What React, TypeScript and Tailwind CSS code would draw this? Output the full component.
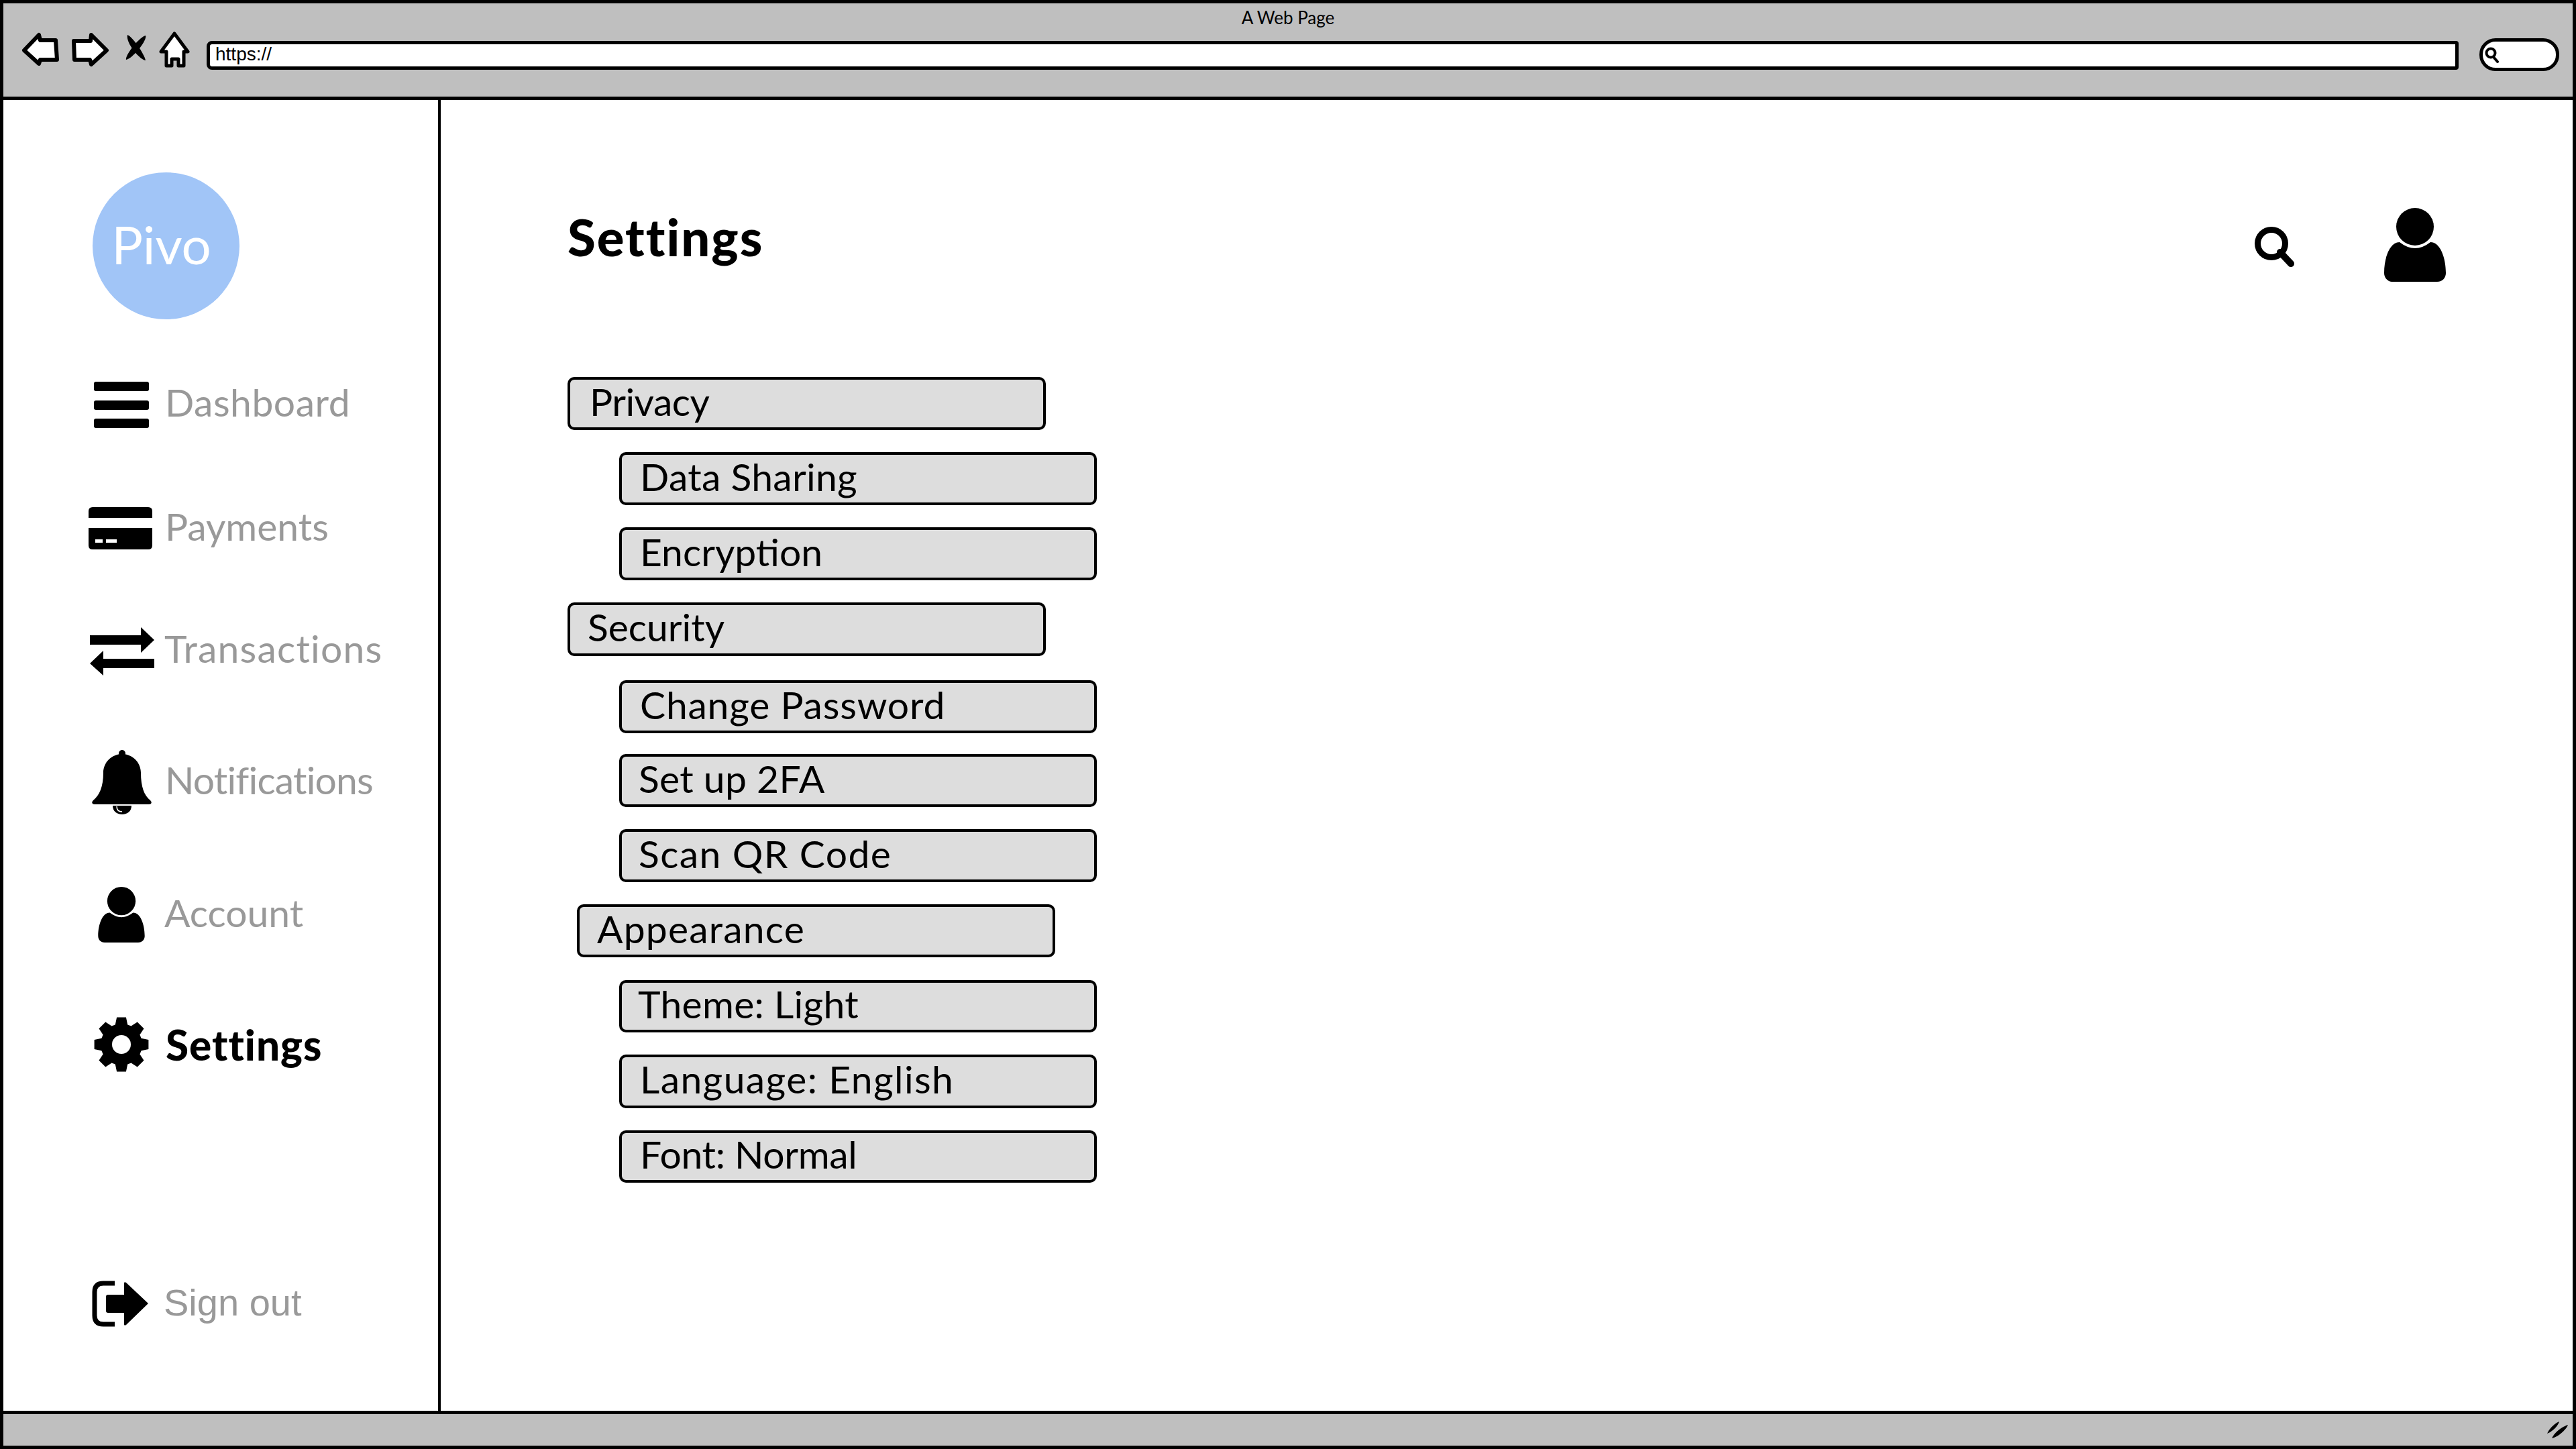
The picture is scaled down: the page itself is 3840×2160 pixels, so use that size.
const gearPath = (() => {
  // eight teeth round a centre of 41,41
  const pts: string[] = [];
  const outer = 41;
  const inner = 31;
  for (let i = 0; i < 8; i++) {
    const mid = (i * Math.PI) / 4 - Math.PI / 2;
    const a = [mid - 0.3, mid - 0.17, mid + 0.17, mid + 0.3];
    const r = [inner, outer, outer, inner];
    a.forEach((t, k) => pts.push(`${(41 + r[k] * Math.cos(t)).toFixed(1)} ${(41 + r[k] * Math.sin(t)).toFixed(1)}`));
  }
  return `M${pts.join(' L')}Z M41 27 A14 14 0 1 0 41 55 A14 14 0 1 0 41 27Z`;
})();

function UserGlyph({ className }: { className: string }) {
  return (
    <svg viewBox="0 0 92 110" className={className}>
      <circle cx="46" cy="28" r="28" />
      <path d="M23 51C8 51 0 75 0 97C0 104 5 110 13 110H79C87 110 92 104 92 97C92 75 84 51 69 51Q46 69 23 51Z" />
    </svg>
  );
}

function Toolbar() {
  return (
    <div className="h-[144px] shrink-0 bg-[#bfbfbf] border-b-[5px] border-black flex flex-col">
      <div className="h-[33px] pt-[8px] text-center text-[26px] leading-[26px] font-['Lato',sans-serif] text-black">
        A Web Page
      </div>
      <div className="flex items-start pl-[27px] pr-[20px]">
        <svg viewBox="0 0 56 50" className="w-[56px] h-[50px] mt-[10px]">
          <path d="M4 27L26 4L28 12H51L53 41H28L26 47Z" fill="#fff" stroke="#000" strokeWidth="6" strokeLinejoin="round" />
        </svg>
        <svg viewBox="0 0 57 52" className="w-[57px] h-[52px] mt-[10px] ml-[18px]">
          <path d="M4 13H29L30 4L53 27L30 48L28 41H5Z" fill="#fff" stroke="#000" strokeWidth="6" strokeLinejoin="round" />
        </svg>
        <svg viewBox="0 0 33 38" className="w-[33px] h-[38px] mt-[14px] ml-[24px]">
          <path d="M3 0C10 2 28 28 30 38C22 38 0 12 3 0Z" />
          <path d="M30 1C33 8 10 36 1 37C-1 30 22 2 30 1Z" />
        </svg>
        <svg viewBox="0 0 46 54" className="w-[46px] h-[54px] mt-[9px] ml-[17px]">
          <path d="M23 3L43 30H37V51H29V41H19V51H11V30H3Z" fill="#fff" stroke="#000" strokeWidth="5" strokeLinejoin="round" />
        </svg>
        <div className="flex-1 h-[43px] mt-[23px] ml-[25px] bg-white border-[5px] border-black rounded-l-[8px] rounded-r-[4px] pl-[8px] text-[28px] leading-[30px] font-['Liberation_Sans',sans-serif] text-black">
          https://
        </div>
        <div className="w-[119px] h-[49px] mt-[19px] ml-[31px] bg-white border-[5px] border-black rounded-[24px] flex items-center pl-[3px]">
          <svg viewBox="0 0 22 24" className="w-[22px] h-[24px]">
            <circle cx="9" cy="9" r="6.5" fill="none" stroke="#000" strokeWidth="4" />
            <path d="M13 15L19 22" stroke="#000" strokeWidth="4" strokeLinecap="round" />
          </svg>
        </div>
      </div>
    </div>
  );
}

function NavLabel({ text, className = 'text-[57px] text-[#999999] mb-[8px]' }: { text: string; className?: string }) {
  return <span className={`leading-[66px] whitespace-nowrap font-['Lato',sans-serif] ${className}`}>{text}</span>;
}

function Sidebar() {
  return (
    <aside className="w-[652px] shrink-0 border-r-[4px] border-black flex flex-col">
      <div className="w-[219px] h-[219px] mt-[108px] ml-[133px] pr-[14px] pb-[4px] rounded-full bg-[#a1c5f7] flex items-center justify-center text-white text-[78px] font-['Lato',sans-serif]">
        Pivo
      </div>

      <div className="flex items-center h-[70px] mt-[92px] pl-[135px] gap-[24px]">
        <svg viewBox="0 0 82 69" className="w-[82px] h-[69px] fill-black">
          <rect width="82" height="14" rx="3" />
          <rect y="28" width="82" height="14" rx="3" />
          <rect y="55" width="82" height="14" rx="3" />
        </svg>
        <NavLabel text="Dashboard" className="text-[57px] text-[#999999] mb-[9px] tracking-[0.5px]" />
      </div>

      <div className="flex items-center h-[63px] mt-[118px] pl-[127px] gap-[19px]">
        <svg viewBox="0 0 95 63" className="w-[95px] h-[63px]">
          <path d="M6 0H89Q95 0 95 6V16H0V6Q0 0 6 0Z" />
          <path d="M0 31H95V57Q95 63 89 63H6Q0 63 0 57Z" />
          <rect x="10" y="48" width="11" height="5" fill="#fff" />
          <rect x="26" y="48" width="16" height="5" fill="#fff" />
        </svg>
        <NavLabel text="Payments" />
      </div>

      <div className="flex items-center h-[72px] mt-[116px] pl-[129px] gap-[15px]">
        <svg viewBox="0 0 96 72" className="w-[96px] h-[72px]">
          <path d="M0 12H76V0L96 19L76 38V26H0Z" />
          <path d="M96 47H20V35L0 54L20 72V61H96Z" />
        </svg>
        <NavLabel text="Transactions" className="text-[57px] text-[#999999] mb-[11px] tracking-[1.2px]" />
      </div>

      <div className="flex items-center h-[96px] mt-[111px] pl-[132px] gap-[20px]">
        <svg viewBox="0 0 89 96" className="w-[89px] h-[96px]">
          <circle cx="45" cy="5" r="5" />
          <path d="M45 6C60 6 73 18 73 34C73 55 78 68 87 75C90 78 89 81 85 81H4C0 81 -1 78 2 75C11 68 17 55 17 34C17 18 30 6 45 6Z" />
          <path d="M31 83H59C59 91 53 96 45 96C37 96 31 91 31 83Z" />
          <path d="M37 84C37 89 40 92 45 92" fill="none" stroke="#fff" strokeWidth="1.5" />
        </svg>
        <NavLabel text="Notifications" className="text-[57px] text-[#999999] mb-[8px] tracking-[-0.8px]" />
      </div>

      <div className="flex items-center h-[83px] mt-[108px] pl-[141px] gap-[29px]">
        <UserGlyph className="w-[70px] h-[83px]" />
        <NavLabel text="Account" />
      </div>

      <div className="flex items-center h-[82px] mt-[111px] pl-[135px] gap-[25px]">
        <svg viewBox="0 0 82 82" className="w-[82px] h-[82px]">
          <path d={gearPath} fillRule="evenodd" />
        </svg>
        <NavLabel text="Settings" className="text-[62px] text-black font-black mb-[0px] tracking-[1px]" />
      </div>

      <div className="flex items-center h-[69px] mt-[311px] pl-[132px] gap-[23px]">
        <svg viewBox="0 0 84 69" className="w-[84px] h-[69px]">
          <path d="M34 4H17Q4 4 4 17V52Q4 65 17 65H34" fill="none" stroke="#000" strokeWidth="7" />
          <path d="M21 24Q21 21 24 21H48V4Q48 1 51 3L84 34L51 66Q48 68 48 65V48H24Q21 48 21 45Z" />
        </svg>
        <span className="text-[56px] leading-[66px] mb-[4px] whitespace-nowrap text-[#999999] font-['Liberation_Sans',sans-serif]">Sign out</span>
      </div>
    </aside>
  );
}

type Row = { label: string; box: string; text: string };

const rows: Row[] = [
  { label: 'Privacy', box: 'ml-[189px] mt-[0px] w-[713px] h-[79px]', text: 'pl-[29px] tracking-[-0.5px]' },
  { label: 'Data Sharing', box: 'ml-[266px] mt-[33px] w-[712px] h-[79px]', text: 'pl-[27px] tracking-[0.3px]' },
  { label: 'Encryption', box: 'ml-[266px] mt-[33px] w-[712px] h-[79px]', text: 'pl-[27px]' },
  { label: 'Security', box: 'ml-[189px] mt-[33px] w-[713px] h-[80px]', text: 'pl-[26px]' },
  { label: 'Change Password', box: 'ml-[266px] mt-[36px] w-[712px] h-[79px]', text: 'pl-[27px] tracking-[0.8px]' },
  { label: 'Set up 2FA', box: 'ml-[266px] mt-[31px] w-[712px] h-[79px]', text: 'pl-[25px] tracking-[0.3px]' },
  { label: 'Scan QR Code', box: 'ml-[266px] mt-[33px] w-[712px] h-[79px]', text: 'pl-[25px] tracking-[1.4px]' },
  { label: 'Appearance', box: 'ml-[203px] mt-[33px] w-[713px] h-[79px]', text: 'pl-[26px] tracking-[1.2px]' },
  { label: 'Theme: Light', box: 'ml-[266px] mt-[34px] w-[712px] h-[78px]', text: 'pl-[24px] tracking-[0.3px]' },
  { label: 'Language: English', box: 'ml-[266px] mt-[33px] w-[712px] h-[80px]', text: 'pl-[27px] tracking-[1.4px]' },
  { label: 'Font: Normal', box: 'ml-[266px] mt-[33px] w-[712px] h-[78px]', text: 'pl-[27px] tracking-[-0.3px]' },
];

function Content() {
  return (
    <main className="flex-1 flex flex-col">
      <div className="h-[413px] shrink-0 flex items-start">
        <h1 className="ml-[189px] mt-[159px] text-[76px] leading-[90px] tracking-[2px] font-black font-['Lato',sans-serif] text-black">Settings</h1>
        <svg viewBox="0 0 60 60" className="w-[60px] h-[60px] ml-auto mt-[189px]">
          <circle cx="25" cy="25" r="20.5" fill="none" stroke="#000" strokeWidth="9" />
          <path d="M38 38L54 55" stroke="#000" strokeWidth="10" strokeLinecap="round" />
        </svg>
        <UserGlyph className="w-[92px] h-[110px] ml-[133px] mr-[189px] mt-[161px]" />
      </div>
      {rows.map((r) => (
        <div
          key={r.label}
          className={`${r.box} ${r.text} pb-[6px] shrink-0 flex items-center bg-[#dddddd] border-[4px] border-black rounded-[10px] text-[57px] font-['Lato',sans-serif] text-black whitespace-nowrap`}
        >
          {r.label}
        </div>
      ))}
    </main>
  );
}

export default function App() {
  return (
    <div className="w-[3840px] h-[2160px] bg-white border-[5px] border-black flex flex-col overflow-hidden">
      <Toolbar />
      <div className="flex-1 flex min-h-0">
        <Sidebar />
        <Content />
      </div>
      <div className="h-[52px] shrink-0 bg-[#bfbfbf] border-t-[5px] border-black flex items-center justify-end pr-[6px]">
        <svg viewBox="0 0 32 26" className="w-[32px] h-[26px]">
          <path d="M0 18C3 11 11 3 18 0C16 7 8 15 0 18Z" />
          <path d="M7 25C11 16 22 8 31 5C28 13 16 23 7 25Z" />
        </svg>
      </div>
    </div>
  );
}
